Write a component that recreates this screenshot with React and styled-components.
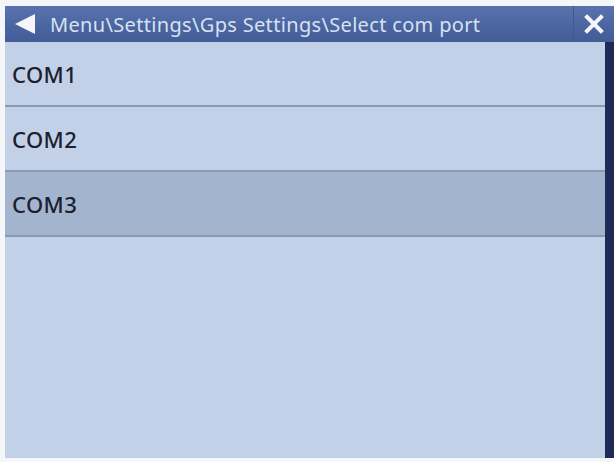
import React from 'react'
import styled, { createGlobalStyle } from 'styled-components'

const Global = createGlobalStyle`
  html, body {
    margin: 0;
    padding: 0;
    background: #f7f8fb;
  }
`

const Screen = styled.div`
  width: 614px;
  height: 462px;
  box-sizing: border-box;
  padding: 6px 0 4px 5px;
  display: flex;
  flex-direction: column;
  font-family: "Noto Sans", "Open Sans", sans-serif;
  background: #f4f6fa;
`

const TitleBar = styled.div`
  height: 36px;
  display: flex;
  align-items: center;
  background: linear-gradient(#5873ad, #4a64a0 60%, #435c96);
  color: #d8e1f2;
`

const BackButton = styled.div`
  width: 40px;
  height: 100%;
  display: flex;
  align-items: center;
  justify-content: center;
`

const Title = styled.div`
  flex: 1;
  font-size: 20px;
  letter-spacing: 0.33px;
  white-space: nowrap;
  padding-left: 5px;
`

const CloseButton = styled.div`
  width: 40px;
  height: 100%;
  display: flex;
  align-items: center;
  justify-content: center;
  border-left: 1px solid #3f5890;
`

const Body = styled.div`
  flex: 1;
  display: flex;
`

const List = styled.div`
  flex: 1;
  background: #c2d0e8;
  display: flex;
  flex-direction: column;
`

const Row = styled.div`
  height: 63px;
  display: flex;
  align-items: center;
  padding-left: 7px;
  font-size: 22px;
  font-weight: 500;
  letter-spacing: 0.4px;
  color: #1b2030;
  background: ${({ selected }) => (selected ? '#a3b4cf' : '#c2d0e8')};
  border-bottom: 2px solid #8a98b0;
`

const ScrollEdge = styled.div`
  width: 9px;
  background: #1f2a57;
`

const items = ['COM1', 'COM2', 'COM3']

export default function App() {
  return (
    <>
      <Global />
      <Screen>
        <TitleBar>
          <BackButton>
            <svg width="24" height="22" viewBox="0 0 24 22">
              <polygon points="22,1 22,21 2,11" fill="#f4f6fb" />
            </svg>
          </BackButton>
          <Title>Menu\Settings\Gps Settings\Select com port</Title>
          <CloseButton>
            <svg width="20" height="20" viewBox="0 0 20 20">
              <path d="M3 3 L17 17 M17 3 L3 17" stroke="#f4f6fb" strokeWidth="4" strokeLinecap="square" />
            </svg>
          </CloseButton>
        </TitleBar>
        <Body>
          <List>
            {items.map((c) => (
              <Row key={c} selected={c === 'COM3'}>{c}</Row>
            ))}
          </List>
          <ScrollEdge />
        </Body>
      </Screen>
    </>
  )
}
